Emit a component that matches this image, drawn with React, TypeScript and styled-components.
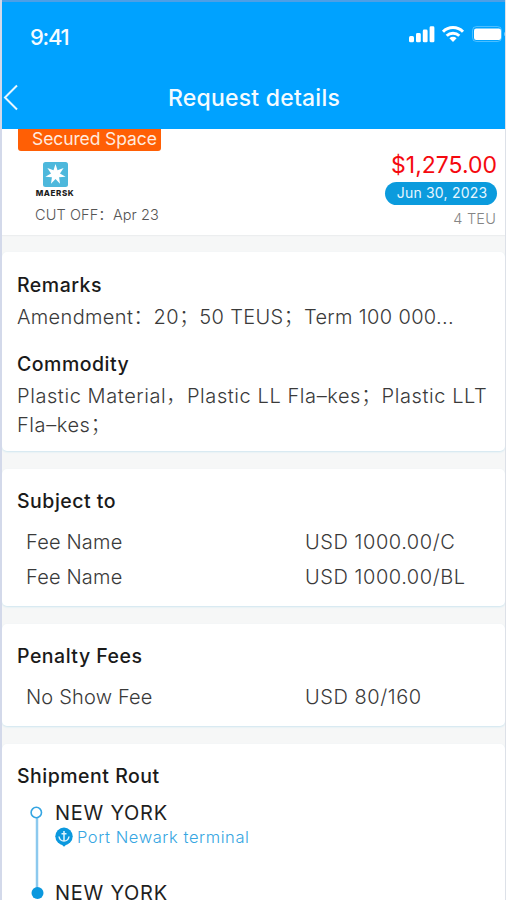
import React from "react";
import styled, { createGlobalStyle } from "styled-components";

const GlobalStyle = createGlobalStyle`
  * { box-sizing: border-box; }
  body {
    margin: 0;
    background: #f6f7f7;
    overflow: hidden;
    font-family: Inter, "Noto Sans CJK SC", sans-serif;
  }
`;

const Screen = styled.div`
  width: 506px;
  height: 900px;
  overflow: hidden;
  display: flex;
  flex-direction: column;
  background: #f6f7f7;
  border-left: 2px solid #d3d9ea;
  border-right: 1px solid #dde1e8;
`;

const Header = styled.header`
  flex: none;
  height: 129px;
  margin: 0 -1px 0 -2px;
  background: #00a2ff;
  color: #f4fbff;
  border-top: 2px solid #4d9fe6;
  border-left: 2px solid #2e9ff0;
`;

const StatusBar = styled.div`
  display: flex;
  justify-content: space-between;
  padding: 20px 0 0 28px;
  height: 66px;
`;

const Clock = styled.div`
  font-size: 22px;
  line-height: 31px;
  font-weight: 450;
  letter-spacing: -1.3px;
`;

const StatusIcons = styled.svg`
  display: block;
  width: 98px;
  height: 30px;
`;

const NavBar = styled.div`
  display: grid;
  grid-template-columns: 100px 1fr 100px;
  align-items: center;
  height: 60px;
`;

const BackIcon = styled.svg`
  width: 18px;
  height: 28px;
  margin-top: -3px;
`;

const Title = styled.h1`
  margin: 0;
  text-align: center;
  white-space: nowrap;
  font-size: 23px;
  line-height: 30px;
  font-weight: 450;
  letter-spacing: 0.22px;
`;

const Summary = styled.section`
  flex: none;
  height: 106px;
  display: flex;
  justify-content: space-between;
  background: #fff;
  padding: 0 8px 0 16px;
  box-shadow: 0 1px 1px #eceeef;
`;

const Carrier = styled.div`
  display: flex;
  flex-direction: column;
  align-items: flex-start;
`;

const Ribbon = styled.div`
  width: 143px;
  height: 22px;
  padding-left: 14px;
  border-radius: 0 0 3px 3px;
  background: #ff5f05;
  color: #ffeadf;
  font-size: 17.5px;
  line-height: 19px;
  letter-spacing: -0.1px;
  white-space: nowrap;
`;

const Logo = styled.div`
  display: flex;
  flex-direction: column;
  align-items: center;
  width: 40px;
  margin: 11px 0 0 17px;
`;

const LogoMark = styled.svg`
  width: 25px;
  height: 25px;
`;

const LogoName = styled.span`
  margin-top: 2px;
  font-size: 8px;
  line-height: 9px;
  font-weight: 800;
  color: #1d1d1d;
  letter-spacing: 0.6px;
`;

const Cutoff = styled.div`
  margin: 5px 0 0 17px;
  font-size: 14.5px;
  line-height: 24px;
  font-weight: 350;
  color: #555;
  white-space: nowrap;
  letter-spacing: 0.1px;
`;

const Quote = styled.div`
  display: flex;
  flex-direction: column;
  align-items: flex-end;
  padding-top: 21px;
`;

const Price = styled.div`
  font-size: 23px;
  line-height: 30px;
  color: #f5090f;
  letter-spacing: 0;
`;

const DatePill = styled.div`
  margin: 2px 0 0;
  width: 112px;
  height: 23px;
  padding-left: 2px;
  border-radius: 12px;
  background: #0b9bdd;
  color: #e5f6ff;
  text-align: center;
  font-size: 14px;
  line-height: 22px;
  white-space: nowrap;
  letter-spacing: 0.2px;
`;

const Teu = styled.div`
  margin: 2px 1px 0 0;
  font-size: 14.5px;
  line-height: 24px;
  font-weight: 350;
  color: #858585;
  letter-spacing: 0.2px;
`;

const Card = styled.section<{ $height: number }>`
  flex: none;
  height: ${(p) => p.$height}px;
  margin-top: 17px;
  & + & { margin-top: 18px; }
  padding: 18px 0 0 15px;
  background: #fff;
  border-radius: 5px;
  box-shadow: 0 1px 2px #cfe6f0;
`;

const Heading = styled.h2`
  margin: 0;
  font-size: 19.5px;
  line-height: 29px;
  font-weight: 460;
  color: #1a1a1a;
  white-space: nowrap;
  letter-spacing: 0.5px;
`;

const Copy = styled.p<{ $track: number }>`
  margin: 3px 0 0;
  font-size: 20px;
  line-height: 29px;
  font-weight: 320;
  color: #3a3a3a;
  white-space: nowrap;
  letter-spacing: ${(p) => p.$track}px;
`;

const Notes = styled.div`
  display: flex;
  flex-direction: column;
  gap: 18px;
  padding-top: 1px;
`;

const FeeList = styled.div`
  padding: 9px 0 0 9px;
`;

const FeeRow = styled.div`
  display: grid;
  grid-template-columns: 279px 1fr;
  height: 35px;
  font-size: 20px;
  line-height: 35px;
  font-weight: 320;
  color: #3a3a3a;
  white-space: nowrap;
`;

const FeeCell = styled.span<{ $track: number }>`
  letter-spacing: ${(p) => p.$track}px;
`;

const Route = styled.div`
  display: grid;
  grid-template-columns: 38px 1fr;
  margin-top: 7px;
`;

const RouteLine = styled.svg`
  width: 38px;
  height: 110px;
`;

const Stop = styled.div`
  height: 80px;
`;

const City = styled.div`
  font-size: 20px;
  line-height: 30px;
  color: #1f1f1f;
  letter-spacing: 0.75px;
`;

const Terminal = styled.div`
  display: flex;
  align-items: center;
  gap: 4px;
  height: 20px;
  margin-top: -1px;
  font-size: 16.5px;
  font-weight: 350;
  line-height: 20px;
  color: #36a6e2;
  white-space: nowrap;
  letter-spacing: 0.58px;
`;

const PortIcon = styled.svg`
  width: 18px;
  height: 20px;
  flex: none;
`;

type Fee = { name: string; amount: string };

const subjectFees: Fee[] = [
  { name: "Fee Name", amount: "USD 1000.00/C" },
  { name: "Fee Name", amount: "USD 1000.00/BL" },
];
const penaltyFees: Fee[] = [{ name: "No Show Fee", amount: "USD 80/160" }];

const Fees = ({ items }: { items: Fee[] }) => (
  <FeeList>
    {items.map((fee, i) => (
      <FeeRow key={i}>
        <FeeCell $track={0.18}>{fee.name}</FeeCell>
        <FeeCell $track={0.55}>{fee.amount}</FeeCell>
      </FeeRow>
    ))}
  </FeeList>
);

const starPoints = Array.from({ length: 14 }, (_, i) => {
  const r = i % 2 ? 4.6 : 10.4;
  const a = -Math.PI / 2 + (i * Math.PI) / 7;
  return `${(12.5 + r * Math.cos(a)).toFixed(2)},${(12.5 + r * Math.sin(a)).toFixed(2)}`;
}).join(" ");

export default function App() {
  return (
    <>
      <GlobalStyle />
      <Screen>
        <Header>
          <StatusBar>
            <Clock>9:41</Clock>
            <StatusIcons viewBox="408 22 98 30" fill="#fff">
              <rect x="409" y="36" width="5" height="6.3" rx="1.5" />
              <rect x="416" y="33" width="4.8" height="9.3" rx="1.4" />
              <rect x="422.8" y="29.5" width="4.8" height="12.8" rx="1.4" />
              <rect x="429.6" y="26.3" width="4.8" height="16" rx="1.4" />
              <g fill="none" stroke="#fff" strokeWidth="3">
                <path d="M443 31.7a14 14 0 0 1 20 0" />
                <path d="M446.7 35.8a9 9 0 0 1 12.6 0" />
              </g>
              <path d="M453 42l-3.6-3.7a5.2 5.2 0 0 1 7.2 0z" />
              <rect x="472.5" y="26.5" width="29" height="15" rx="4" fill="none" stroke="#fff" strokeOpacity=".3" />
              <rect x="474" y="28.4" width="27" height="11.6" rx="2.2" />
              <path d="M504 32q3 2 0 4z" fillOpacity=".4" />
            </StatusIcons>
          </StatusBar>
          <NavBar>
            <BackIcon viewBox="0 0 18 28" fill="none" stroke="#e8f7ff" strokeWidth="2">
              <path d="M15 2.5L3 14.5l12 12" />
            </BackIcon>
            <Title>Request details</Title>
          </NavBar>
        </Header>

        <Summary>
          <Carrier>
            <Ribbon>Secured Space</Ribbon>
            <Logo>
              <LogoMark viewBox="0 0 25 25">
                <rect width="25" height="25" rx="2.5" fill="#4db8dc" />
                <polygon points={starPoints} fill="#fff" />
              </LogoMark>
              <LogoName>MAERSK</LogoName>
            </Logo>
            <Cutoff>CUT OFF：Apr 23</Cutoff>
          </Carrier>
          <Quote>
            <Price>$1,275.00</Price>
            <DatePill>Jun 30, 2023</DatePill>
            <Teu>4 TEU</Teu>
          </Quote>
        </Summary>

        <Card $height={199}>
          <Notes>
            <div>
              <Heading>Remarks</Heading>
              <Copy $track={0.35}>Amendment：20；50 TEUS；Term 100 000...</Copy>
            </div>
            <div>
              <Heading>Commodity</Heading>
              <Copy $track={0.58}>
                Plastic Material，Plastic LL Fla–kes；Plastic LLT
                <br />
                Fla–kes；
              </Copy>
            </div>
          </Notes>
        </Card>

        <Card $height={137}>
          <Heading>Subject to</Heading>
          <Fees items={subjectFees} />
        </Card>

        <Card $height={102}>
          <Heading>Penalty Fees</Heading>
          <Fees items={penaltyFees} />
        </Card>

        <Card $height={180}>
          <Heading>Shipment Rout</Heading>
          <Route>
            <RouteLine viewBox="17 798 38 110">
              <path d="M37 818v70" stroke="#8cc9ee" strokeWidth="2.5" />
              <circle cx="36.3" cy="812.5" r="5.2" fill="#fff" stroke="#35a5e2" strokeWidth="1.6" />
              <circle cx="37.5" cy="893" r="6" fill="#0b98de" />
            </RouteLine>
            <div>
              <Stop>
                <City>NEW YORK</City>
                <Terminal>
                  <PortIcon viewBox="0 0 18 20">
                    <circle cx="9" cy="9.3" r="8.7" fill="#0b98de" />
                    <path d="M5.500 16.500L9 19.800l3.500-3.300z" fill="#0b98de" />
                    <g fill="none" stroke="#dff3fd" strokeWidth="1.5">
                      <path d="M9 4v10M6.500 6.700h5M4 9.500c.5 3 2.500 4.500 5 4.500s4.500-1.500 5-4.500" />
                    </g>
                  </PortIcon>
                  Port Newark terminal
                </Terminal>
              </Stop>
              <City>NEW YORK</City>
            </div>
          </Route>
        </Card>
      </Screen>
    </>
  );
}
